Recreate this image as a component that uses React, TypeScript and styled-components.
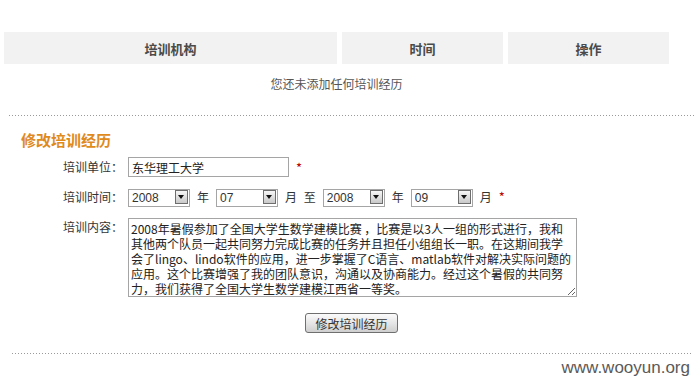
import React from 'react';
import styled, { createGlobalStyle } from 'styled-components';

const cjk = `"Noto Sans CJK SC", "Liberation Sans", sans-serif`;

const GlobalStyle = createGlobalStyle`
  body {
    margin: 0;
    background: #fff;
    font-family: ${cjk};
    font-size: 12px;
    color: #333;
  }
`;

const Page = styled.div`
  position: relative;
  width: 700px;
  height: 379px;
  padding-top: 32px;
  box-sizing: border-box;
  overflow: hidden;
`;

const HeaderRow = styled.div`
  display: grid;
  grid-template-columns: 333px 161px 161px;
  column-gap: 5px;
  margin-left: 4px;
`;

const HeaderCell = styled.div`
  height: 32px;
  display: flex;
  align-items: center;
  justify-content: center;

  background: #f2f2f2;
  color: #4a4a4a;
  font-size: 13px;
  font-weight: bold;
`;

const EmptyNote = styled.div`
  width: 665px;
  margin: 12px 0 0 4px;
  line-height: 16px;
  text-align: center;
  color: #555;
`;

type DividerProps = {
  $left: number;
  $right: number;
  $top: number;
};

const Divider = styled.div<DividerProps>`
  height: 1px;
  margin: ${({ $top, $right, $left }) => `${$top}px ${$right}px 0 ${$left}px`};
  background-image: linear-gradient(to right, #9a9a9a 1px, transparent 1px);
  background-size: 3px 1px;
`;

const Section = styled.div`
  padding-left: 21px;
`;

const Title = styled.h3`
  margin: 10px 0 0;
  font-size: 15px;
  line-height: 28px;
  font-weight: bold;
  color: #e08a1c;
`;

type RowProps = {
  $top?: boolean;
  $gap: number;
};

const Row = styled.div<RowProps>`
  display: flex;
  align-items: ${({ $top }) => ($top ? 'flex-start' : 'center')};
  margin-top: ${({ $gap }) => $gap}px;
`;

const Label = styled.label`
  flex: 0 0 62px;
  margin: 0 5px 0 40px;
  text-align: right;
  line-height: 18px;
  white-space: nowrap;
  color: #333;
`;

const TextInput = styled.input`
  width: 161px;
  height: 20px;
  box-sizing: border-box;
  padding: 0 3px;

  border: 1px solid #a5a5a5;
  font-family: ${cjk};
  font-size: 12px;
  color: #222;
  outline: none;
`;

type RequiredProps = {
  $space?: number;
};

const Required = styled.span<RequiredProps>`
  margin-left: ${({ $space = 7 }) => $space}px;
  color: #b00;
  font-size: 13px;
`;

const SelectWrap = styled.span`
  position: relative;
  display: inline-block;
  width: 62px;
  height: 18px;
`;

const Select = styled.select`
  appearance: none;
  width: 100%;
  height: 100%;
  box-sizing: border-box;
  margin: 0;
  padding: 0 0 0 3px;

  border: 1px solid #a5a5a5;
  border-radius: 0;
  background: #fff;
  font-family: 'Liberation Sans', sans-serif;
  font-size: 12px;
  color: #333;
  outline: none;
`;

const Arrow = styled.span`
  position: absolute;
  top: 2px;
  right: 2px;
  width: 11px;
  height: 12px;
  pointer-events: none;

  border: 1px solid #6e6e6e;
  background: linear-gradient(#f6f6f6, #c9c9c9);

  &:after {
    content: '';
    position: absolute;
    left: 2px;
    top: 4px;
    border-left: 3.5px solid transparent;
    border-right: 3.5px solid transparent;
    border-top: 4px solid #111;
  }
`;

const Unit = styled.span`
  margin: 0 7px;
  color: #333;
  word-spacing: 4px;
`;

const TextArea = styled.textarea`
  width: 449px;
  height: 79px;
  box-sizing: border-box;
  margin: 0;
  padding: 2px 2px;

  border: 1px solid #a5a5a5;
  font-family: ${cjk};
  font-size: 12px;
  line-height: 15px;
  color: #222;
  white-space: pre;
  overflow: hidden;
  outline: none;
`;

const Actions = styled.div`
  display: flex;
  justify-content: center;
  width: 449px;
  margin: 16px 0 0 106px;
`;

const Button = styled.button`
  width: 93px;
  height: 20px;
  padding: 0;

  border: 1px solid #6f6f6f;
  border-radius: 3px;
  background: linear-gradient(#fbfbfb, #e6e6e6 50%, #cfcfcf);
  font-family: ${cjk};
  font-size: 12px;
  color: #333;
`;

const Watermark = styled.div`
  position: absolute;
  right: 10px;
  bottom: 1px;
  font-family: 'Liberation Sans', sans-serif;
  font-size: 17px;
  color: #5a5a5a;
`;

const content = [
  '2008年暑假参加了全国大学生数学建模比赛 ，比赛是以3人一组的形式进行，我和',
  '其他两个队员一起共同努力完成比赛的任务并且担任小组组长一职。在这期间我学',
  '会了lingo、lindo软件的应用，进一步掌握了C语言、matlab软件对解决实际问题的',
  '应用。这个比赛增强了我的团队意识，沟通以及协商能力。经过这个暑假的共同努',
  '力，我们获得了全国大学生数学建模江西省一等奖。',
].join('\n');

type DropdownProps = {
  value: string;
  options: string[];
};

const Dropdown: React.FC<DropdownProps> = ({ value, options }) => {
  return (
    <SelectWrap>
      <Select defaultValue={value}>
        {options.map((o) => (
          <option key={o}>{o}</option>
        ))}
      </Select>
      <Arrow />
    </SelectWrap>
  );
};

const years = ['2006', '2007', '2008', '2009', '2010'];
const months = ['01', '02', '03', '04', '05', '06', '07', '08', '09', '10', '11', '12'];

export default function App() {
  return (
    <Page>
      <GlobalStyle />
      <HeaderRow>
        <HeaderCell>培训机构</HeaderCell>
        <HeaderCell>时间</HeaderCell>
        <HeaderCell>操作</HeaderCell>
      </HeaderRow>
      <EmptyNote>您还未添加任何培训经历</EmptyNote>
      <Divider $top={23} $left={9} $right={5} />

      <Section>
        <Title>修改培训经历</Title>
        <Row $gap={3}>
          <Label>培训单位：</Label>
          <TextInput defaultValue="东华理工大学" />
          <Required>*</Required>
        </Row>
        <Row $gap={10}>
          <Label>培训时间：</Label>
          <Dropdown value="2008" options={years} />
          <Unit>年</Unit>
          <Dropdown value="07" options={months} />
          <Unit>月 至</Unit>
          <Dropdown value="2008" options={years} />
          <Unit>年</Unit>
          <Dropdown value="09" options={months} />
          <Unit>月</Unit>
          <Required $space={0}>*</Required>
        </Row>
        <Row $top $gap={12}>
          <Label>培训内容：</Label>
          <TextArea defaultValue={content} />
        </Row>
        <Actions>
          <Button>修改培训经历</Button>
        </Actions>
      </Section>

      <Divider $top={20} $left={12} $right={7} />
      <Watermark>www.wooyun.org</Watermark>
    </Page>
  );
}
